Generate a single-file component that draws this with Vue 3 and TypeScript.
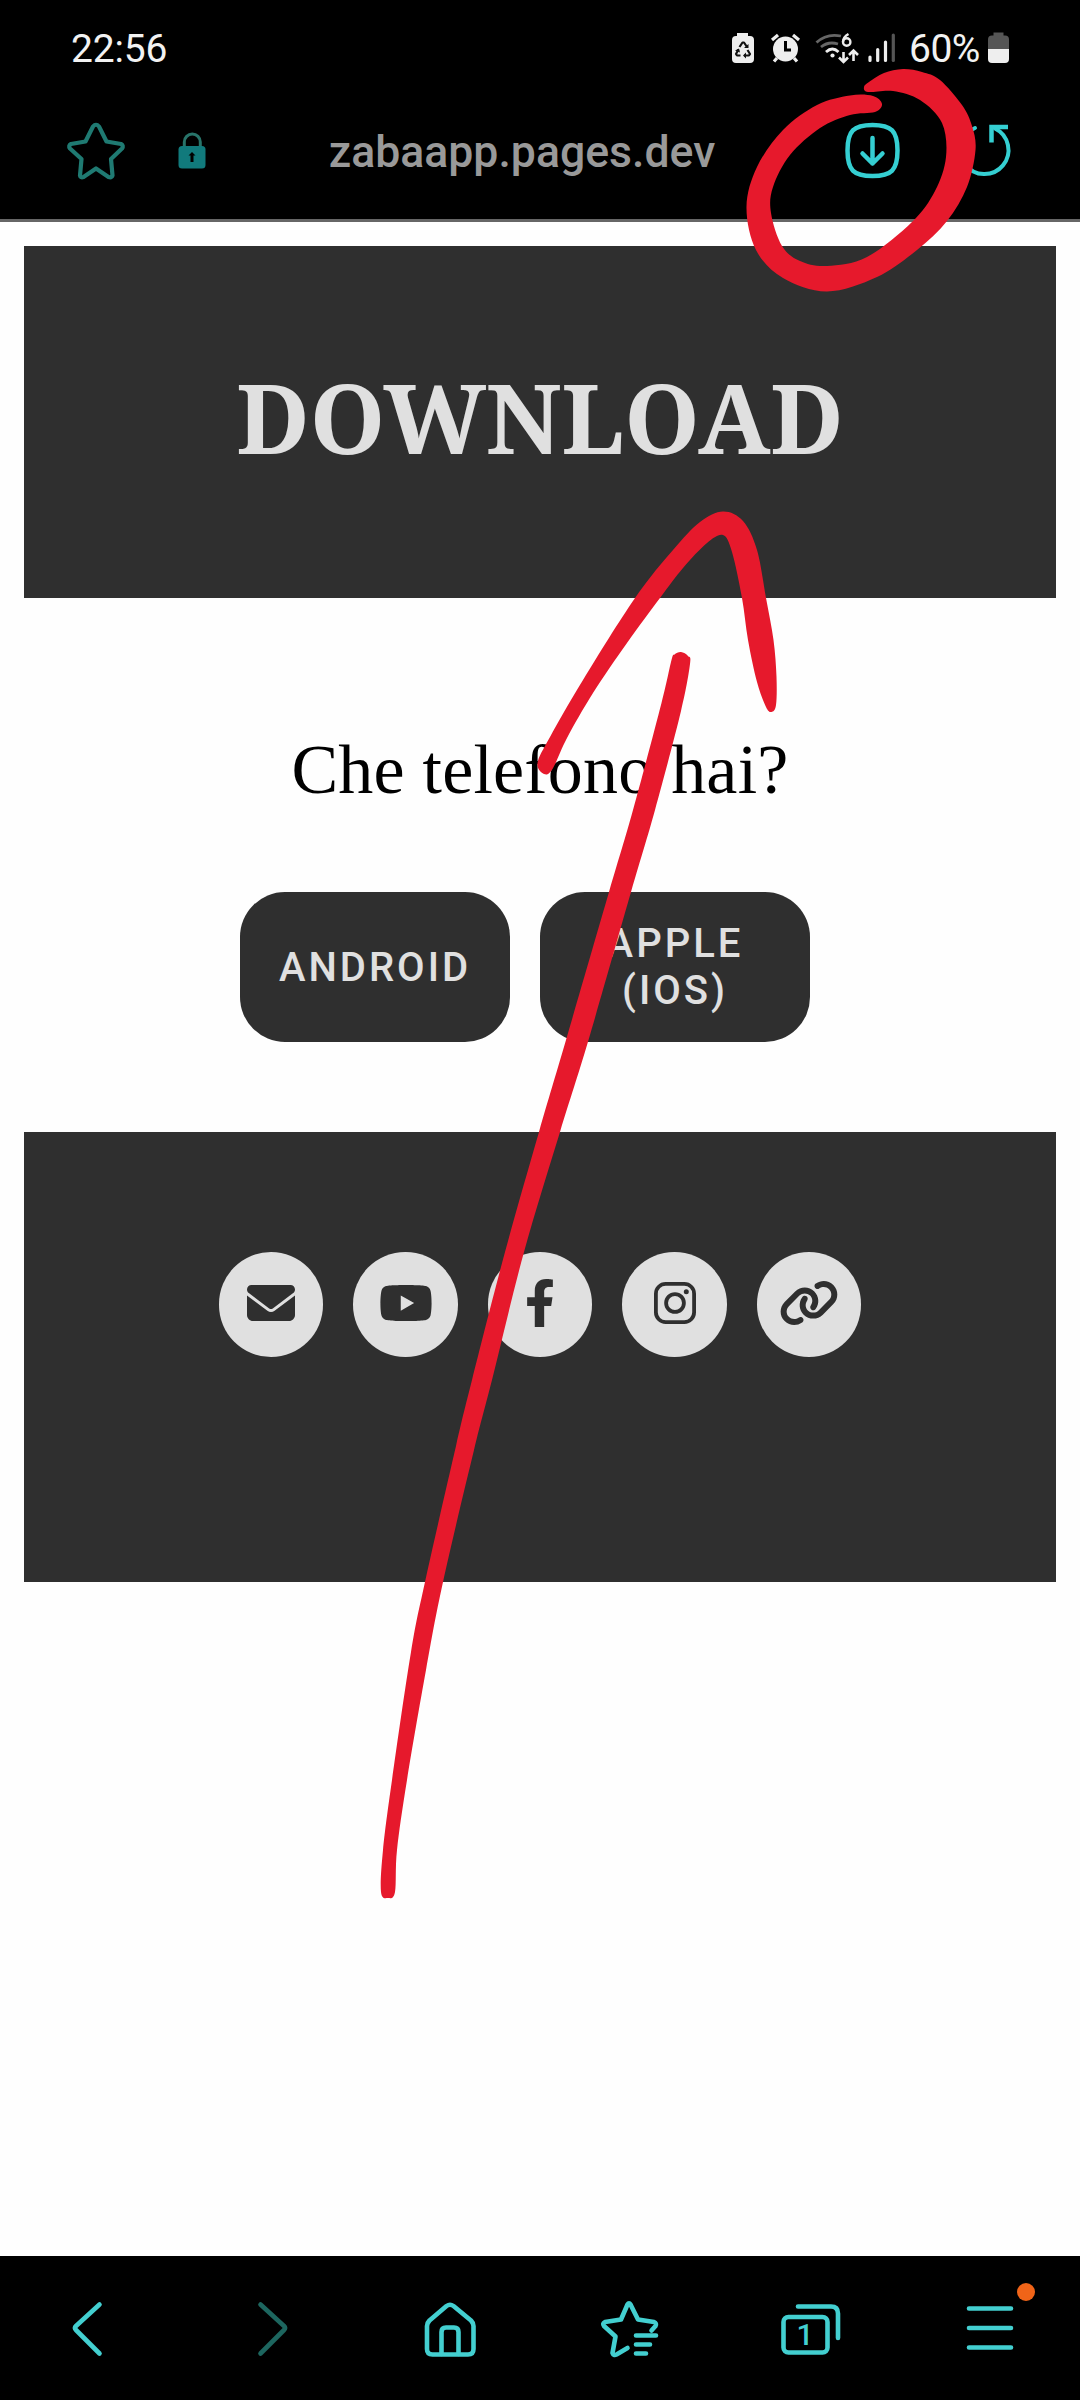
<script setup lang="ts">
type Point = [number, number]

// Closed Catmull-Rom curve through the outline points of a marker stroke.
function outline(points: Point[]): string {
  const n = points.length
  let d = `M${points[0][0]} ${points[0][1]}`
  for (let i = 0; i < n; i++) {
    const a = points[(i - 1 + n) % n]
    const b = points[i]
    const c = points[(i + 1) % n]
    const e = points[(i + 2) % n]
    d += `C${b[0] + (c[0] - a[0]) / 6} ${b[1] + (c[1] - a[1]) / 6} ${c[0] - (e[0] - b[0]) / 6} ${c[1] - (e[1] - b[1]) / 6} ${c[0]} ${c[1]}`
  }
  return d + 'Z'
}

const ring = outline([
  [864, 87], [869, 82], [884, 73], [903, 69], [922, 72], [940, 80], [962, 105], [972, 126], [975.5, 150], [967, 187],
  [947, 221], [917, 250], [877, 277], [827, 291.5], [783, 278], [756, 250], [746.5, 207],
  [757, 167], [783, 130], [817, 105], [850, 95.5], [873, 96], [882, 104], [875, 112],
  [850, 115], [820, 128], [790, 155], [773, 187], [771, 213], [782, 246], [800, 261],
  [827, 266], [867, 257], [912, 222], [935, 191], [946, 157], [942, 123], [920, 100],
  [893, 91], [868, 92],
])

const head = outline([
  [537.5, 763], [550, 737], [583, 680], [635, 598], [673, 550], [700, 522], [723, 511.5],
  [743, 521], [757, 550], [766, 598], [773.500, 640], [776.500, 677], [776, 705], [771.5, 712],
  [766, 707], [757, 682], [748, 640], [742, 598], [732, 552], [723, 535], [707, 543],
  [683, 568], [660, 598], [627, 643], [593, 693], [567, 738], [552.5, 769], [544, 774],
])

const shaft = outline([
  [671.5, 660], [661.5, 703], [633, 810], [609, 892], [566, 1040], [539, 1132], [505, 1252],
  [472, 1380], [456, 1446], [425, 1582], [411, 1652], [392, 1780], [383, 1850], [381, 1892],
  [388, 1898], [395, 1892], [397, 1850], [407, 1780], [426, 1670], [443, 1582], [474, 1450],
  [492, 1380], [524, 1252], [560, 1132], [588.5, 1040], [631, 892], [655, 810], [681, 711],
  [690, 664], [688, 656], [681, 652], [674.5, 654.5],
])

const links: string[] = ['mail', 'youtube', 'facebook', 'instagram', 'website']
</script>

<template>
  <div class="screen">
    <header class="top">
      <div class="status">
        <span class="clock">22:56</span>
        <div class="indicators">
          <svg width="180" height="36" viewBox="728 30 180 36" fill="none">
            <path d="M737 36v-3h11v3h2q4 0 4 4v19q0 4-4 4h-14q-4 0-4-4V40q0-4 4-4z" fill="#eee" />
            <g stroke="#111" stroke-width="2.200" stroke-linejoin="round">
              <path d="M739.500 47l3-4.500h1.500l3 4.500M747.500 50l2.500 4-1 1.500h-5M740.500 55.500h-3.500l-1-1.500 2.500-4.500" />
            </g>
            <path d="M744 48h4.500v-4zM746 52.500l-3 3 3 3zM735 50.500l4-2 1 4z" fill="#111" />
            <circle cx="785.500" cy="49" r="12.500" fill="#eee" />
            <path d="M772 40l6-5M799 40l-6-5M777 58l-3 3.500M794 58l3 3.500" stroke="#eee" stroke-width="3.200" />
            <path d="M785.500 41v9h5.500" stroke="#000" stroke-width="3" />
            <g stroke-width="2.800">
              <path d="M816.500 42.500q10-9.500 24.500-6.500M821 47q7.500-6 17-3" stroke="#666" />
              <path d="M826 52q6.500-6 12.500 0" stroke="#eee" />
            </g>
            <circle cx="832.500" cy="55.500" r="2.100" fill="#eee" />
            <path d="M848.500 34q-5.500 3-5.500 8" stroke="#eee" stroke-width="2.400" />
            <circle cx="846.700" cy="42" r="3.700" stroke="#eee" stroke-width="2.400" />
            <path d="M843.500 52v10M839 57.500l4.500 4.500 4.500-4.500M853.500 61V51M849 55l4.500-4.500 4.500 4.500" stroke="#eee" stroke-width="2.600" />
            <g stroke-width="3.200" stroke-linecap="round">
              <path d="M870 57v3.500M877.700 49.500v11M885.500 42v18.500" stroke="#eee" />
              <path d="M893.300 35v25.500" stroke="#555" />
            </g>
          </svg>
          <span class="percent">60%</span>
          <svg width="22" height="32" viewBox="988 32 22 32">
            <path d="M993.500 35.500V32.500h10v3h1.500q4 0 4 4V50h-21V39.500q0-4 4-4z" fill="#555" />
            <path d="M988 49h21v10q0 4-4 4h-13q-4 0-4-4z" fill="#eee" />
          </svg>
        </div>
      </div>
      <div class="toolbar">
        <svg width="150" height="64" viewBox="64 118 150 64" fill="none">
          <path
            d="M93 126.500q3-3.500 6 0l7.500 15 14.500 2.500q3 1.500 1 4.500l-11 10.500 1.500 16.500q-1 2.500-4 1.500L96 168.500l-12.500 8.500q-3 1-3.500-1.500l1.500-16.500-11.500-10.500q-2-3 1-4.500l14.500-2.500z"
            stroke="#1f7a72" stroke-width="4.200" stroke-linejoin="round"
          />
          <path d="M184.300 147v-5a8 8 0 0 1 16 0v5" stroke="#28746a" stroke-width="3" />
          <path d="M182 146h20q3.500 0 3.500 3.500V165q0 3.500-3.500 3.500h-20q-3.500 0-3.500-3.500v-15.500q0-3.500 3.500-3.500z" fill="#117a7c" />
          <path d="M192 152l3.500 3.500h-2v6.500h-3v-6.500h-2z" fill="#000" />
        </svg>
        <span class="url">zabaapp.pages.dev</span>
        <svg width="176" height="64" viewBox="840 118 176 64" fill="none" stroke="#35cfd2" stroke-width="4.500" stroke-linecap="round" stroke-linejoin="round">
          <path d="M872.500 125c19 0 25 6 25 25.500s-6 25.500-25 25.500-25-6-25-25.500 6-25.500 25-25.500z" />
          <path d="M872.500 138v25.500M862.500 153.500l10 10 10-10" />
          <path d="M995 128.500a24 24 0 1 1-20-.5" stroke-width="4" />
          <path d="M1008 127h-16.500v15.500" stroke-linecap="butt" stroke-linejoin="miter" />
        </svg>
      </div>
    </header>

    <main class="page">
      <section class="hero"><h1>DOWNLOAD</h1></section>
      <section class="choice">
        <h2>Che telefono hai?</h2>
        <div class="buttons">
          <button type="button">ANDROID</button>
          <button type="button">APPLE<br />(IOS)</button>
        </div>
      </section>
      <section class="social">
        <a v-for="name in links" :key="name" class="bubble">
          <svg v-if="name === 'mail'" width="48" height="48" viewBox="0 0 512 512">
            <path d="M48 64C21.500 64 0 85.500 0 112c0 15.100 7.100 29.300 19.200 38.400L236.800 313.600c11.400 8.500 27 8.500 38.400 0L492.800 150.400c12.100-9.100 19.200-23.300 19.200-38.400c0-26.500-21.500-48-48-48H48zM0 176V384c0 35.300 28.700 64 64 64H448c35.300 0 64-28.700 64-64V176L294.400 339.200c-22.800 17.100-54 17.100-76.800 0L0 176z" />
          </svg>
          <svg v-else-if="name === 'youtube'" width="54" height="48" viewBox="0 0 576 512">
            <path d="M549.655 124.083c-6.281-23.650-24.787-42.276-48.284-48.597C458.781 64 288 64 288 64S117.220 64 74.629 75.486c-23.497 6.322-42.003 24.947-48.284 48.597-11.412 42.867-11.412 132.305-11.412 132.305s0 89.438 11.412 132.305c6.281 23.650 24.787 41.500 48.284 47.821C117.220 448 288 448 288 448s170.780 0 213.371-11.486c23.497-6.321 42.003-24.171 48.284-47.821 11.412-42.867 11.412-132.305 11.412-132.305s0-89.438-11.412-132.305zm-317.510 213.508V175.185l142.739 81.205-142.739 81.201z" />
          </svg>
          <svg v-else-if="name === 'facebook'" width="30" height="48" viewBox="0 0 320 512">
            <path d="M279.140 288l14.220-92.660h-88.910v-60.130c0-25.350 12.420-50.060 52.240-50.060h40.420V6.260S260.430 0 225.360 0c-73.220 0-121.080 44.380-121.080 124.720v70.620H22.890V288h81.390v224h100.170V288z" />
          </svg>
          <svg v-else-if="name === 'instagram'" width="42" height="48" viewBox="0 0 42 48" class="line">
            <rect x="1.900" y="4.900" width="38.200" height="38.200" rx="9.800" />
            <circle cx="21" cy="24" r="8.900" />
            <circle cx="32.300" cy="12.700" r="2.500" class="solid" />
          </svg>
          <svg v-else width="60" height="48" viewBox="0 0 640 512">
            <path d="M579.800 267.700c56.500-56.500 56.500-148 0-204.500c-50-50-128.800-56.500-186.300-15.400l-1.600 1.100c-14.400 10.300-17.700 30.300-7.400 44.600s30.300 17.700 44.600 7.400l1.600-1.100c32.100-22.900 76-19.300 103.800 8.600c31.500 31.500 31.500 82.500 0 114L422.300 334.800c-31.500 31.500-82.500 31.500-114 0c-27.900-27.900-31.500-71.800-8.600-103.800l1.100-1.600c10.300-14.400 6.900-34.400-7.400-44.600s-34.400-6.900-44.600 7.400l-1.100 1.600C206.500 251.200 213 330 263 380c56.500 56.500 148 56.500 204.500 0L579.800 267.700zM60.200 244.300c-56.500 56.500-56.500 148 0 204.500c50 50 128.800 56.500 186.300 15.400l1.600-1.100c14.400-10.300 17.700-30.300 7.400-44.600s-30.300-17.700-44.600-7.400l-1.600 1.100c-32.100 22.900-76 19.300-103.800-8.600C74 372 74 321 105.500 289.500L217.700 177.200c31.500-31.500 82.500-31.500 114 0c27.900 27.900 31.500 71.800 8.600 103.900l-1.100 1.600c-10.300 14.400-6.900 34.400 7.400 44.600s34.400 6.900 44.600-7.400l1.100-1.600C433.500 260.800 427 182 377 132c-56.500-56.500-148-56.500-204.500 0L60.200 244.300z" />
          </svg>
        </a>
      </section>
    </main>

    <nav class="bottom">
      <svg viewBox="0 2256 180 144"><path d="M99.500 2304.500L76 2326q-2 2 0 4l23.500 23.500" /></svg>
      <svg viewBox="180 2256 180 144" class="dim"><path d="M260.500 2304.500L284 2326q2 2 0 4l-23.500 23.500" /></svg>
      <svg viewBox="360 2256 180 144">
        <path d="M446.500 2306.500q3.500-2.500 7 0L471 2321q2.500 2.500 2.500 5.500v23q0 5.500-5.500 5.500h-35.500q-5.500 0-5.500-5.500v-23q0-3 2.500-5.500z" transform="translate(0 -.5)" />
        <path d="M441.500 2354v-22q0-4.500 4.500-4.500h8q4.500 0 4.500 4.500v22" />
      </svg>
      <svg viewBox="540 2256 180 144">
        <path d="M651.500 2331l4-4.500q1.500-2.500-1.500-4L638 2320l-7.500-15q-1.500-2.500-3 0L621 2320l-16 2.500q-3 1.500-1 4L615.500 2337l-3 16.500q1 3 4 1.500l11-6.500" transform="translate(0 -.5)" />
        <path d="M636 2335.500h20M636 2344.500h14M636 2353.500h10" />
      </svg>
      <svg viewBox="720 2256 180 144">
        <rect x="783.500" y="2317" width="44" height="35.500" rx="5" />
        <path d="M798 2306.500h33q7 0 7 7v24.500" />
        <text x="805" y="2344.500">1</text>
      </svg>
      <svg viewBox="900 2256 180 144">
        <path d="M969 2308.500h42M969 2328h42M969 2347.500h42" />
        <circle cx="1026" cy="2292" r="9" class="dot" />
      </svg>
    </nav>

    <svg class="marker" viewBox="0 0 1080 2400" fill="#e6192c">
      <path :d="ring" />
      <path :d="head" />
      <path :d="shaft" />
    </svg>
  </div>
</template>

<style>
body {
  margin: 0;
  background: #fefefe;
}
</style>

<style scoped>
.screen {
  position: relative;
  display: flex;
  flex-direction: column;
  width: 1080px;
  height: 2400px;
  background: #fefefe;
  font-family: Roboto, "Liberation Sans", sans-serif;
}
svg {
  display: block;
}
.top {
  box-sizing: border-box;
  height: 222px;
  background: #000;
  border-bottom: 3px solid #666;
}
.status {
  display: flex;
  justify-content: space-between;
  align-items: center;
  height: 96px;
  padding: 0 70px 0 71px;
}
.clock,
.percent {
  font-size: 39px;
  line-height: 46px;
  padding-top: 2px;
  color: #f2f2f2;
}
.clock {
  letter-spacing: -0.2px;
}
.indicators {
  display: flex;
  align-items: center;
}
.percent {
  box-sizing: border-box;
  width: 80px;
  padding-left: 1px;
  letter-spacing: -0.5px;
}
.toolbar {
  display: flex;
  align-items: center;
  justify-content: space-between;
  height: 64px;
  padding: 0 64px;
  margin-top: 22px;
}
.url {
  width: 400px;
  margin-left: -10px;
  padding-top: 3px;
  text-align: center;
  font-size: 44.6px;
  line-height: 64px;
  font-weight: 500;
  color: #999;
  white-space: nowrap;
}
.page {
  flex: 1;
  padding: 24px 24px 0;
}
.hero {
  display: flex;
  align-items: center;
  justify-content: center;
  box-sizing: border-box;
  height: 352px;
  padding-bottom: 11px;
  background: #2f2f2f;
}
h1 {
  margin: 0;
  font: 700 96px/120px "Noto Serif", "DejaVu Serif Condensed", "DejaVu Serif", serif;
  color: #e0e0e0;
}
.choice {
  display: flex;
  flex-direction: column;
  align-items: center;
  height: 534px;
}
h2 {
  margin: 132px 0 0;
  font: 400 70px/80px "Liberation Serif", serif;
  letter-spacing: 0.2px;
  color: #000;
}
.buttons {
  display: flex;
  gap: 30px;
  margin: 82px 30px 0 0;
}
button {
  width: 270px;
  height: 150px;
  padding: 0;
  border: 0;
  border-radius: 45px;
  background: #2f2f2f;
  color: #e0e0e0;
  font: 500 40px/47px Roboto, sans-serif;
  letter-spacing: 3px;
}
.social {
  display: flex;
  justify-content: center;
  gap: 30px;
  box-sizing: border-box;
  height: 450px;
  padding-top: 120px;
  background: #2f2f2f;
}
.bubble {
  display: flex;
  align-items: center;
  justify-content: center;
  box-sizing: border-box;
  width: 104.5px;
  height: 104.5px;
  padding-bottom: 2px;
  border-radius: 50%;
  background: #e0e0e0;
}
.bubble svg {
  fill: #2f2f2f;
}
.bubble .line {
  fill: none;
  stroke: #2f2f2f;
  stroke-width: 3.8;
}
.bubble .solid {
  fill: #2f2f2f;
  stroke: none;
}
.bottom {
  display: flex;
  height: 144px;
  background: #000;
}
.bottom svg {
  width: 180px;
  height: 144px;
  fill: none;
  stroke: #43cfd0;
  stroke-width: 4.6;
  stroke-linecap: round;
  stroke-linejoin: round;
}
.bottom .dim {
  stroke: #1d665f;
}
.bottom text {
  fill: #43cfd0;
  stroke: none;
  font-size: 30px;
  font-weight: 500;
  text-anchor: middle;
}
.bottom .dot {
  fill: #f06418;
  stroke: none;
}
.marker {
  position: absolute;
  inset: 0;
  width: 1080px;
  height: 2400px;
  pointer-events: none;
}
</style>
